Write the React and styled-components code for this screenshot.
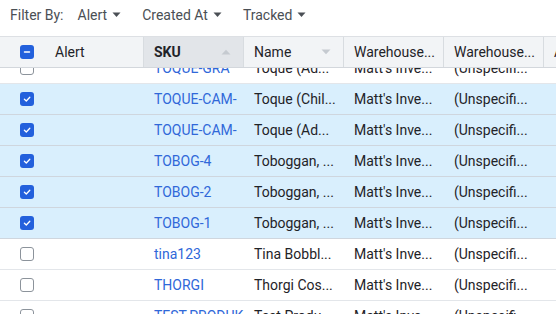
import React, { useLayoutEffect, useRef } from "react";
import styled, { createGlobalStyle } from "styled-components";

const Global = createGlobalStyle`
  html, body { margin: 0; padding: 0; background: #fff; }
  body { font-family: Roboto, "Noto Sans", sans-serif; color: #1f2328; }
`;

const Page = styled.div`
  width: 556px;
  height: 314px;
  overflow: hidden;
  display: flex;
  flex-direction: column;
`;

const FilterBar = styled.div`
  height: 36px;
  box-sizing: border-box;
  padding: 0 0 6px 10px;
  display: flex;
  align-items: center;
  font-size: 14px;
  color: #4a4f55;
  flex-shrink: 0;
`;

const FilterLabel = styled.span`
  margin-right: 14px;
`;

const Dropdown = styled.span`
  display: inline-flex;
  align-items: center;
  gap: 5px;
  margin-right: 21px;
`;

const Caret = () => (
  <svg width="9" height="6" viewBox="0 0 9 6">
    <path d="M0.5 0.5 H8.5 L4.5 5 Z" fill="#4a4f55" />
  </svg>
);

const Grid = styled.div`
  display: grid;
  grid-template-columns: 144px 100px 100px 100px 100px 100px;
`;

const Header = styled(Grid)`
  height: 30px;
  border-top: 1px solid #dde0e4;
  border-bottom: 1px solid #d3d7dc;
  background: #f2f4f6;
  flex-shrink: 0;
`;

const HeadCell = styled.div`
  display: flex;
  align-items: center;
  padding-left: ${(p) => (p.$first ? "20px" : "10px")};
  padding-right: 12px;
  gap: ${(p) => (p.$first ? "21px" : "0")};
  border-right: 1px solid #d8dce0;
  background: ${(p) => (p.$sorted ? "#e2e5e9" : "transparent")};
  font-size: 14px;
  font-weight: ${(p) => (p.$sorted ? 700 : 400)};
  white-space: nowrap;
  overflow: hidden;
`;

const HeadText = styled.span`
  flex: 1;
`;

const SortArrow = ({ dir }) => (
  <svg width="10" height="6" viewBox="0 0 10 6" style={{ flexShrink: 0 }}>
    {dir === "up" ? (
      <path d="M0.5 5.5 L5 0.8 L9.5 5.5 Z" fill="#c5cad0" />
    ) : (
      <path d="M0.5 0.5 L9.5 0.5 L5 5.2 Z" fill="#c5cad0" />
    )}
  </svg>
);

const Body = styled.div`
  flex: 1;
  overflow: hidden;
`;

const Row = styled(Grid)`
  height: 30px;
  border-bottom: 1px solid ${(p) => (p.$selected ? "#cfd6de" : "#e3e6ea")};
  background: ${(p) => (p.$selected ? "#d9effd" : "#fff")};
`;

const Cell = styled.div`
  display: flex;
  align-items: center;
  padding-left: ${(p) => (p.$first ? "20px" : "10px")};
  font-size: 14px;
  white-space: nowrap;
  overflow: hidden;
  color: ${(p) => (p.$link ? "#3068d9" : "#1f2328")};
`;

const Box = styled.span`
  width: 14px;
  height: 14px;
  box-sizing: border-box;
  border-radius: 3px;
  display: inline-flex;
  align-items: center;
  justify-content: center;
  flex-shrink: 0;
  background: ${(p) => (p.$on ? "#2360dc" : "#fff")};
  border: ${(p) => (p.$on ? "none" : "1.5px solid #8c939b")};
`;

const Checkbox = ({ state }) => (
  <Box $on={state !== "off"}>
    {state === "on" && (
      <svg width="10" height="10" viewBox="0 0 10 10">
        <path d="M2.4 5.2 L4.3 7 L7.8 3.2" stroke="#fff" strokeWidth="1.3" fill="none" strokeLinecap="round" strokeLinejoin="round" />
      </svg>
    )}
    {state === "mixed" && (
      <svg width="10" height="10" viewBox="0 0 10 10">
        <path d="M2.5 5 H7.5" stroke="#fff" strokeWidth="1.5" strokeLinecap="round" />
      </svg>
    )}
  </Box>
);

const rows = [
  { sku: "TOQUE-GRA", name: "Toque (Ad...", sel: false },
  { sku: "TOQUE-CAM-", name: "Toque (Chil...", sel: true },
  { sku: "TOQUE-CAM-", name: "Toque (Ad...", sel: true },
  { sku: "TOBOG-4", name: "Toboggan, ...", sel: true },
  { sku: "TOBOG-2", name: "Toboggan, ...", sel: true },
  { sku: "TOBOG-1", name: "Toboggan, ...", sel: true },
  { sku: "tina123", name: "Tina Bobbl...", sel: false },
  { sku: "THORGI", name: "Thorgi Cos...", sel: false },
  { sku: "TEST-PRODUK", name: "Test Produ...", sel: false },
];

export default function App() {
  const bodyRef = useRef(null);
  useLayoutEffect(() => {
    if (bodyRef.current) bodyRef.current.scrollTop = 15;
  }, []);
  return (
    <>
      <Global />
      <Page>
        <FilterBar>
          <FilterLabel>Filter By:</FilterLabel>
          <Dropdown>Alert <Caret /></Dropdown>
          <Dropdown>Created At <Caret /></Dropdown>
          <Dropdown>Tracked <Caret /></Dropdown>
        </FilterBar>
        <Header>
          <HeadCell $first>
            <Checkbox state="mixed" />
            <HeadText>Alert</HeadText>
          </HeadCell>
          <HeadCell $sorted>
            <HeadText>SKU</HeadText>
            <SortArrow dir="up" />
          </HeadCell>
          <HeadCell>
            <HeadText>Name</HeadText>
            <SortArrow dir="down" />
          </HeadCell>
          <HeadCell>
            <HeadText>Warehouse...</HeadText>
          </HeadCell>
          <HeadCell>
            <HeadText>Warehouse...</HeadText>
          </HeadCell>
          <HeadCell>
            <HeadText>Available</HeadText>
          </HeadCell>
        </Header>
        <Body ref={bodyRef}>
          {rows.map((r, i) => (
            <Row key={i} $selected={r.sel}>
              <Cell $first>
                <Checkbox state={r.sel ? "on" : "off"} />
              </Cell>
              <Cell $link>{r.sku}</Cell>
              <Cell>{r.name}</Cell>
              <Cell>Matt's Inve...</Cell>
              <Cell>(Unspecifi...</Cell>
              <Cell />
            </Row>
          ))}
        </Body>
      </Page>
    </>
  );
}
